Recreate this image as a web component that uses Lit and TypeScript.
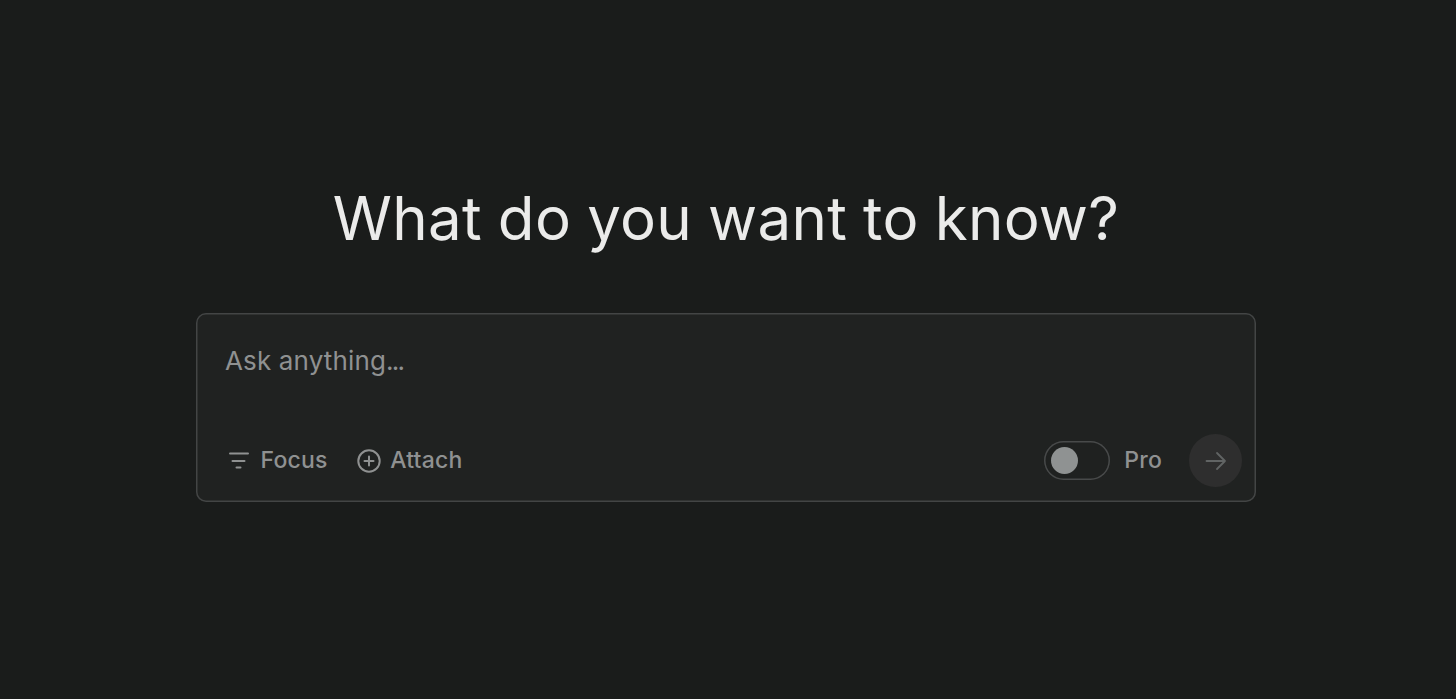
import { LitElement, html, css } from 'lit';
import { customElement, property, state } from 'lit/decorators.js';

@customElement('pro-toggle')
class ProToggle extends LitElement {
  static styles = css`
    :host {
      display: flex;
    }
    .track {
      box-sizing: border-box;
      display: flex;
      align-items: center;
      width: 66px;
      height: 39px;
      padding: 0 6.5px;
      border-radius: 20px;
      background: #1f2120;
      box-shadow: inset 0 0 0 1.5px #484a4a;
      cursor: pointer;
    }
    .track.on {
      justify-content: flex-end;
    }
    .knob {
      width: 27px;
      height: 27px;
      border-radius: 50%;
      background: #8f9292;
    }
  `;

  @property({ type: Boolean }) checked = false;

  handleClick() {
    this.checked = !this.checked;
  }

  render() {
    return html`
      <div class="track ${this.checked ? 'on' : ''}" role="switch" @click="${this.handleClick}">
        <div class="knob"></div>
      </div>
    `;
  }
}

@customElement('ask-box')
class AskBox extends LitElement {
  static styles = css`
    :host {
      display: block;
      width: 1060px;
    }
    .box {
      box-sizing: border-box;
      display: flex;
      flex-direction: column;
      justify-content: space-between;
      height: 189px;
      padding: 31px 14px 15px 29px;
      border-radius: 10px;
      background: #202221;
      box-shadow: inset 0 0 0 1.5px #434545;
      color: #8f9191;
    }
    .prompt {
      font-size: 26px;
      line-height: 34px;
      letter-spacing: 0.15px;
    }
    .dots {
      letter-spacing: -1.8px;
    }
    .bar,
    .group,
    .action {
      display: flex;
      align-items: center;
    }
    .bar {
      justify-content: space-between;
      font-size: 23px;
      font-weight: 500;
      line-height: 30px;
    }
    .action {
      cursor: pointer;
    }
    .focus {
      gap: 11px;
      padding-left: 2.5px;
      margin-right: 28px;
    }
    .attach {
      gap: 8.5px;
    }
    .label {
      padding-bottom: 1px;
      letter-spacing: 0.2px;
    }
    .pro {
      margin: 0 27px 0 14px;
    }
    .send {
      display: flex;
      align-items: center;
      justify-content: center;
      width: 53px;
      height: 53px;
      border-radius: 50%;
      background: #2e2e2e;
      color: #616464;
    }
    svg {
      display: block;
      fill: none;
      stroke: currentColor;
      stroke-linecap: round;
      stroke-linejoin: round;
    }
  `;

  @state() query = '';

  render() {
    return html`
      <div class="box">
        <div class="prompt">${this.query || html`Ask anything<span class="dots">...</span>`}</div>
        <div class="bar">
          <div class="group">
            <div class="action focus">
              <svg width="22" height="26" viewBox="0 0 22 26" stroke-width="2">
                <path d="M2 5.5h18M4.5 13h12M8.5 19.5h4" />
              </svg>
              <span class="label">Focus</span>
            </div>
            <div class="action attach">
              <svg width="26" height="26" viewBox="0 0 26 26" stroke-width="2">
                <circle cx="13" cy="13" r="10.7" />
                <path d="M13 8.5v9M8.5 13h9" />
              </svg>
              <span class="label">Attach</span>
            </div>
          </div>
          <div class="group">
            <pro-toggle></pro-toggle>
            <span class="label pro">Pro</span>
            <div class="send">
              <svg width="24" height="24" viewBox="0 0 24 24" stroke-width="1.8">
                <path d="M2.5 12h18.5M13 4l8 8-8 8" />
              </svg>
            </div>
          </div>
        </div>
      </div>
    `;
  }
}

@customElement('app-root')
class AppRoot extends LitElement {
  static styles = css`
    :host {
      display: block;
      font-family: Inter, 'Liberation Sans', sans-serif;
    }
    .page {
      box-sizing: border-box;
      display: flex;
      flex-direction: column;
      align-items: center;
      height: 699px;
      padding: 182px 4px 0 0;
      background: #1a1c1b;
    }
    .title {
      margin: 0 0 59px;
      color: #ebebea;
      font-size: 60px;
      font-weight: 400;
      line-height: 72px;
      letter-spacing: 0.3px;
      word-spacing: -1.2px;
    }
  `;

  render() {
    return html`
      <div class="page">
        <h1 class="title">What do you want to know?</h1>
        <ask-box></ask-box>
      </div>
    `;
  }
}
